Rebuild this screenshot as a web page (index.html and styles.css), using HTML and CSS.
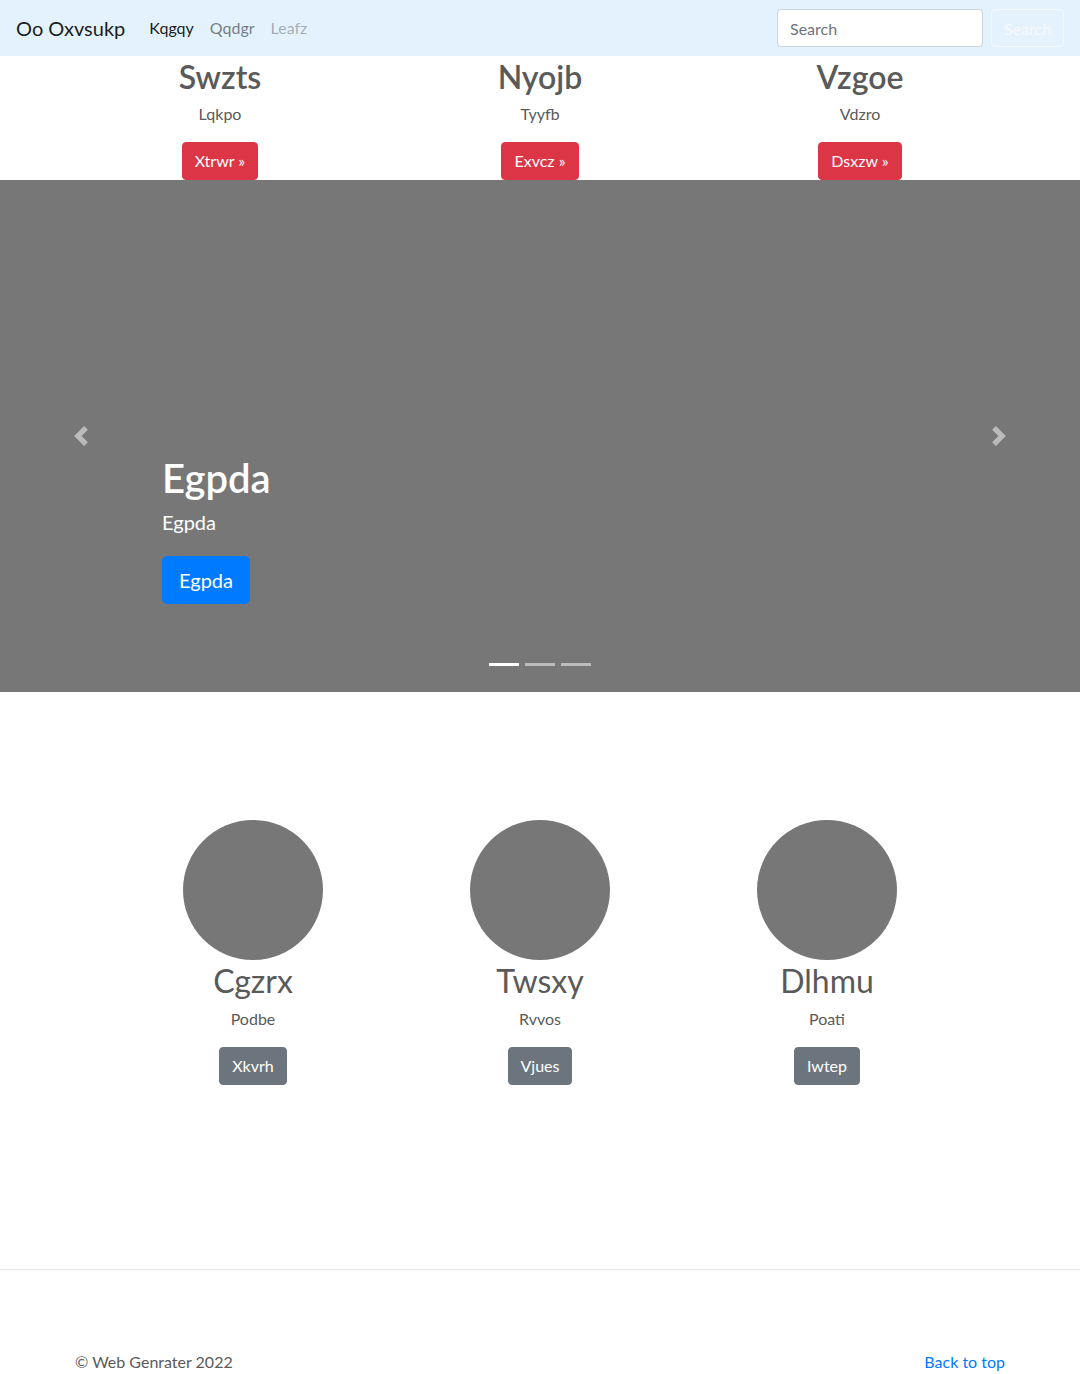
FILE: index.html
```html
<!DOCTYPE html>
<html lang="en">
<head>
<meta charset="utf-8">
<title>Oo Oxvsukp</title>
<link rel="stylesheet" href="styles.css">
</head>
<body>
<nav class="navbar">
  <a class="brand" href="#">Oo Oxvsukp</a>
  <ul class="nav">
    <li><a class="nav-link active" href="#">Kqgqy</a></li>
    <li><a class="nav-link" href="#">Qqdgr</a></li>
    <li><a class="nav-link disabled" href="#">Leafz</a></li>
  </ul>
  <form class="search">
    <input class="search-input" type="text" placeholder="Search">
    <button class="search-btn" type="button">Search</button>
  </form>
</nav>

<section class="features">
  <div class="feature">
    <h2 class="feature-title">Swzts</h2>
    <p class="feature-text">Lqkpo</p>
    <a class="btn btn-danger" href="#">Xtrwr &raquo;</a>
  </div>
  <div class="feature">
    <h2 class="feature-title">Nyojb</h2>
    <p class="feature-text">Tyyfb</p>
    <a class="btn btn-danger" href="#">Exvcz &raquo;</a>
  </div>
  <div class="feature">
    <h2 class="feature-title">Vzgoe</h2>
    <p class="feature-text">Vdzro</p>
    <a class="btn btn-danger" href="#">Dsxzw &raquo;</a>
  </div>
</section>

<div class="carousel">
  <ol class="indicators">
    <li class="indicator active"></li>
    <li class="indicator"></li>
    <li class="indicator"></li>
  </ol>
  <a class="control control-prev" href="#">
    <svg class="control-icon" viewBox="0 0 8 8" width="20" height="20"><path fill="#fff" d="M5.25 0l-4 4 4 4 1.5-1.5L4.25 4l2.5-2.5L5.25 0z"/></svg>
  </a>
  <a class="control control-next" href="#">
    <svg class="control-icon" viewBox="0 0 8 8" width="20" height="20"><path fill="#fff" d="M2.75 0l-1.5 1.5L3.75 4l-2.5 2.5L2.75 8l4-4-4-4z"/></svg>
  </a>
  <div class="caption">
    <h1 class="caption-title">Egpda</h1>
    <p class="caption-text">Egpda</p>
    <a class="btn btn-lg btn-primary" href="#">Egpda</a>
  </div>
</div>

<section class="marketing">
  <div class="member">
    <div class="avatar"></div>
    <h2 class="member-name">Cgzrx</h2>
    <p class="member-text">Podbe</p>
    <a class="btn btn-secondary" href="#">Xkvrh</a>
  </div>
  <div class="member">
    <div class="avatar"></div>
    <h2 class="member-name">Twsxy</h2>
    <p class="member-text">Rvvos</p>
    <a class="btn btn-secondary" href="#">Vjues</a>
  </div>
  <div class="member">
    <div class="avatar"></div>
    <h2 class="member-name">Dlhmu</h2>
    <p class="member-text">Poati</p>
    <a class="btn btn-secondary" href="#">Iwtep</a>
  </div>
</section>

<hr class="divider">

<footer class="footer">
  <p class="copy">&copy; Web Genrater 2022</p>
  <p class="top-link"><a href="#">Back to top</a></p>
</footer>
</body>
</html>
```

FILE: styles.css
```css
* { box-sizing: border-box; }

html, body {
  margin: 0;
  padding: 0;
}

body {
  font-family: Lato, "Open Sans", "Noto Sans", sans-serif;
  font-size: 16px;
  line-height: 1.5;
  color: #5a5a5a;
  background: #fff;
}

a { text-decoration: none; }

/* navbar */
.navbar {
  display: flex;
  align-items: center;
  height: 56px;
  padding: 8px 16px;
  background: #e3f2fd;
}

.brand {
  font-size: 20px;
  line-height: 30px;
  padding: 5px 0;
  margin-right: 16px;
  color: rgba(0, 0, 0, 0.9);
}

.nav {
  display: flex;
  list-style: none;
  margin: 0;
  padding: 0;
  flex: 1;
}

.nav-link {
  display: block;
  padding: 8px;
  color: rgba(0, 0, 0, 0.5);
}

.nav-link.active { color: rgba(0, 0, 0, 0.9); }
.nav-link.disabled { color: rgba(0, 0, 0, 0.3); }

.search {
  display: flex;
  align-items: center;
  gap: 8px;
}

.search-input {
  width: 206px;
  height: 38px;
  padding: 6px 12px;
  font-family: inherit;
  font-size: 16px;
  color: #495057;
  background: #fff;
  border: 1px solid #ced4da;
  border-radius: 4px;
}

.search-input::placeholder { color: #6c757d; }

.search-btn {
  width: 73px;
  height: 38px;
  padding: 6px 12px;
  font-family: inherit;
  font-size: 16px;
  color: #f8f9fa;
  background: transparent;
  border: 1px solid #f8f9fa;
  border-radius: 4px;
}

/* buttons */
.btn {
  display: inline-block;
  padding: 6px 12px;
  font-size: 16px;
  line-height: 24px;
  border: 1px solid transparent;
  border-radius: 4px;
  color: #fff;
}

.btn-lg {
  padding: 8px 16px;
  font-size: 20px;
  line-height: 30px;
  border-radius: 5px;
}

.btn-danger { background: #dc3545; border-color: #dc3545; }
.btn-primary { background: #007bff; border-color: #007bff; }
.btn-secondary { background: #6c757d; border-color: #6c757d; }

/* feature row */
.features {
  display: grid;
  grid-template-columns: repeat(3, 320px);
  justify-content: center;
}

.feature {
  display: flex;
  flex-direction: column;
  align-items: center;
  text-align: center;
}

.feature-title {
  margin: 0 0 6px;
  padding-top: 2px;
  font-size: 32px;
  line-height: 1.2;
  font-weight: 600;
}

.feature-text {
  margin: 0 0 16px;
}

/* carousel */
.carousel {
  position: relative;
  height: 512px;
  background: #777;
}

.indicators {
  position: absolute;
  left: 0;
  right: 0;
  bottom: 0;
  display: flex;
  justify-content: center;
  margin: 0 0 16px;
  padding: 0;
  list-style: none;
}

.indicator {
  width: 30px;
  height: 3px;
  margin: 10px 3px;
  background: #fff;
  opacity: 0.5;
}

.indicator.active { opacity: 1; }

.control {
  position: absolute;
  top: 0;
  bottom: 0;
  width: 15%;
  display: flex;
  align-items: center;
  justify-content: center;
  opacity: 0.5;
}

.control-prev { left: 0; }
.control-next { right: 0; }

.control-icon { display: block; }

.caption {
  position: absolute;
  left: 15%;
  right: 15%;
  bottom: 88px;
  color: #fff;
}

.caption-title {
  margin: 0 0 5px;
  font-size: 40px;
  line-height: 1.2;
  font-weight: 600;
}

.caption-text {
  margin: 0 0 19px;
  font-size: 20px;
  line-height: 30px;
}

/* marketing */
.marketing {
  display: grid;
  grid-template-columns: repeat(3, 287px);
  justify-content: center;
  padding-top: 128px;
}

.member {
  display: flex;
  flex-direction: column;
  align-items: center;
  text-align: center;
}

.avatar {
  width: 140px;
  height: 140px;
  border-radius: 50%;
  background: #777;
}

.member-name {
  margin: 0 0 6px;
  padding-top: 2px;
  font-size: 32px;
  line-height: 1.2;
  font-weight: 400;
}

.member-text {
  margin: 0 0 16px;
}

.divider {
  margin: 184px 0 80px;
  border: 0;
  border-top: 1px solid #e5e5e5;
}

/* footer */
.footer {
  display: flex;
  justify-content: space-between;
  width: 930px;
  margin: 0 auto;
}

.copy, .top-link {
  margin: 0 0 16px;
}

.top-link a { color: #007bff; }
```
